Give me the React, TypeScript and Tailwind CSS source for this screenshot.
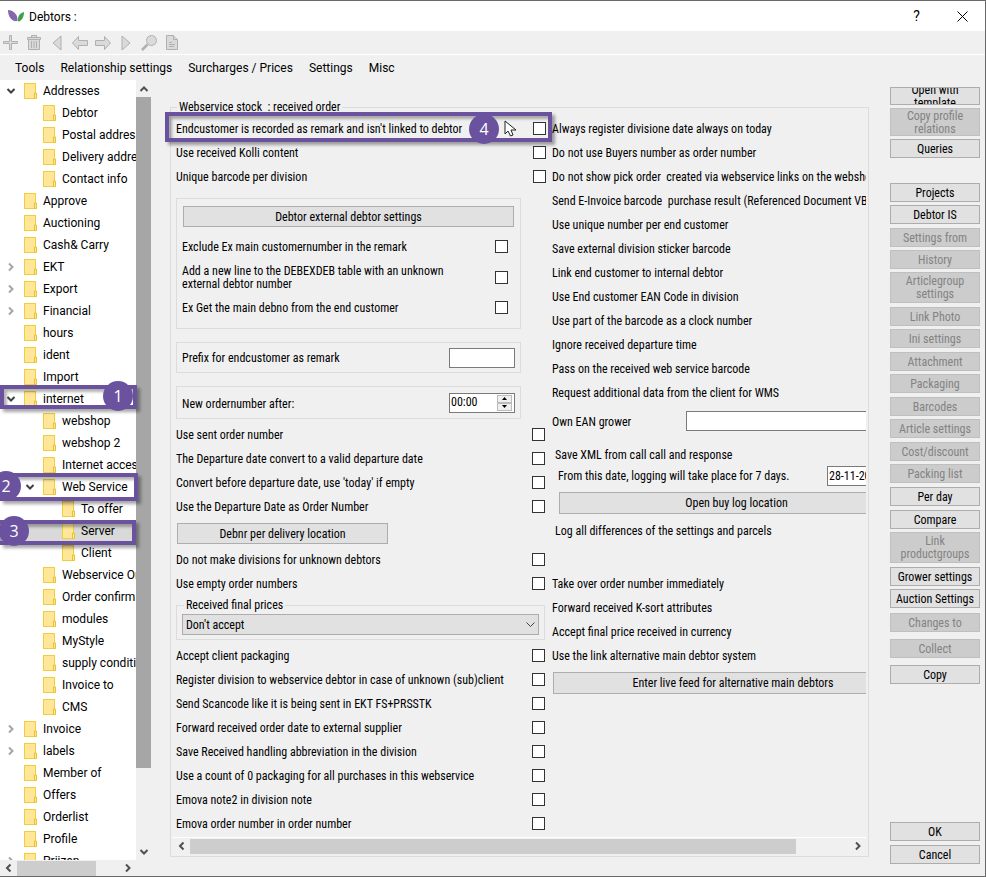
import type { ReactNode } from "react";

type TreeItem = { label: string; level: 0 | 1 | 2; state?: "open" | "closed"; selected?: boolean };

const tree: TreeItem[] = [
  { label: "Addresses", level: 0, state: "open" },
  { label: "Debtor", level: 1 },
  { label: "Postal addresses", level: 1 },
  { label: "Delivery addresses", level: 1 },
  { label: "Contact info", level: 1 },
  { label: "Approve", level: 0 },
  { label: "Auctioning", level: 0 },
  { label: "Cash& Carry", level: 0 },
  { label: "EKT", level: 0, state: "closed" },
  { label: "Export", level: 0, state: "closed" },
  { label: "Financial", level: 0, state: "closed" },
  { label: "hours", level: 0 },
  { label: "ident", level: 0 },
  { label: "Import", level: 0 },
  { label: "internet", level: 0, state: "open" },
  { label: "webshop", level: 1 },
  { label: "webshop 2", level: 1 },
  { label: "Internet access", level: 1 },
  { label: "Web Service", level: 1, state: "open" },
  { label: "To offer", level: 2 },
  { label: "Server", level: 2, selected: true },
  { label: "Client", level: 2 },
  { label: "Webservice Orders", level: 1 },
  { label: "Order confirmation", level: 1 },
  { label: "modules", level: 1 },
  { label: "MyStyle", level: 1 },
  { label: "supply conditions", level: 1 },
  { label: "Invoice to", level: 1 },
  { label: "CMS", level: 1 },
  { label: "Invoice", level: 0, state: "closed" },
  { label: "labels", level: 0, state: "closed" },
  { label: "Member of", level: 0 },
  { label: "Offers", level: 0 },
  { label: "Orderlist", level: 0 },
  { label: "Profile", level: 0 },
  { label: "Prijzen", level: 0, state: "closed" },
];

const indent = { 0: "pl-0", 1: "pl-[19px]", 2: "pl-[38px]" };

function Chevron({ dir, className }: { dir: "up" | "down" | "left" | "right"; className: string }) {
  const d = {
    up: "M1.5 7 5 3.5 8.5 7",
    down: "M1.5 3 5 6.5 8.5 3",
    left: "M6.5 1.5 3 5 6.5 8.5",
    right: "M3 1.5 6.5 5 3 8.5",
  }[dir];
  return (
    <svg viewBox="0 0 10 10" className={`h-[10px] w-[10px] shrink-0 fill-none ${className}`} strokeWidth="2">
      <path d={d} />
    </svg>
  );
}

function Folder() {
  return (
    <svg viewBox="0 0 13 16" className="h-4 w-[13px] shrink-0">
      <rect x="0.5" y="0.5" width="11" height="15" fill="#ffe699" stroke="#f0cf3a" />
      <path d="M10.5 15.5v-5.5h2v5.5z" fill="#ffe699" stroke="#e8c22f" />
    </svg>
  );
}

function TreeRow({ item }: { item: TreeItem }) {
  return (
    <li className={`flex h-[22px] shrink-0 items-center ${indent[item.level]} ${item.selected ? "bg-[#d9d9d9]" : ""}`}>
      <span className="flex w-6 shrink-0 justify-center pr-[3px]">
        {item.state === "open" && <Chevron dir="down" className="stroke-[#404040]" />}
        {item.state === "closed" && <Chevron dir="right" className="stroke-[#a6a6a6]" />}
      </span>
      <Folder />
      <span className="whitespace-nowrap pl-[6px]">{item.label}</span>
    </li>
  );
}

function Badge({ n, className }: { n: number; className: string }) {
  return (
    <span
      className={`absolute flex h-[30px] w-[30px] items-center justify-center rounded-full bg-[#6b529f] font-['Open_Sans',sans-serif] text-[16px] text-white ${className}`}
    >
      {n}
    </span>
  );
}

function Frame({ className }: { className: string }) {
  return (
    <span
      className={`pointer-events-none absolute border-[#6b529f] shadow-[3px_3px_3px_rgba(0,0,0,0.35),inset_3px_3px_3px_rgba(0,0,0,0.3)] ${className}`}
    />
  );
}

const boxClass = "mb-px h-[13px] w-[13px] shrink-0 appearance-none border border-[#333] bg-white checked:bg-[#333]";

function Tick({ children, tall }: { children: ReactNode; tall?: boolean }) {
  return (
    <label className={`flex items-center justify-between ${tall ? "h-[37px]" : "h-6"}`}>
      <span className="pt-px">{children}</span>
      <input type="checkbox" className={boxClass} />
    </label>
  );
}

function Line({ children }: { children: ReactNode }) {
  return <p className="flex h-6 items-center pt-px">{children}</p>;
}

function Push({ children, className, disabled }: { children: ReactNode; className: string; disabled?: boolean }) {
  return (
    <button
      type="button"
      disabled={disabled}
      className={`flex shrink-0 items-center justify-center overflow-hidden border border-[#adadad] bg-[#e1e1e1] pt-px text-center leading-[13px] text-black disabled:border-[#bfbfbf] disabled:bg-[#ccc] disabled:text-[#838383] ${className}`}
    >
      {children}
    </button>
  );
}

const tools: [string, ReactNode][] = [
  ["Add", <path key="a" d="M6.500 .500h2v6h6v2h-6v6h-2v-6h-6v-2h6z" />],
  ["Delete", <path key="d" d="M1.500 2.500h13v2h-13zM5.500 2.500v-2h5v2M2.500 4.500h11v10h-11zM5.500 6v7M8 6v7M10.500 6v7" />],
  ["First", <path key="f" d="M12 1v14L4 8z" />],
  ["Previous", <path key="p" d="M.500 8 6.500 1.500v4h9v5h-9v4z" />],
  ["Next", <path key="n" d="M15.500 8 9.500 1.500v4h-9v5h9v4z" />],
  ["Last", <path key="l" d="M4 1v14L12 8z" />],
  ["Search", <g key="s"><circle cx="10.500" cy="5.500" r="5" /><path d="M6.500 9.500 1 15" strokeWidth="2.500" /></g>],
  ["Document", <g key="o"><path d="M2.500 .500h7l4 4v10h-11z" /><path d="M9.500 .500v4h4M5 7.500h3M5 9.500h6M5 11.500h5" /></g>],
];

const actions: { label: string; gap: string; off?: boolean; h?: string }[] = [
  { label: "Projects", gap: "" },
  { label: "Debtor IS", gap: "mt-[3px]" },
  { label: "Settings from", gap: "mt-1", off: true },
  { label: "History", gap: "mt-[3px]", off: true },
  { label: "Articlegroup settings", gap: "mt-[3px]", off: true, h: "h-[31px]" },
  { label: "Link Photo", gap: "mt-1", off: true },
  { label: "Ini settings", gap: "mt-[3px]", off: true },
  { label: "Attachment", gap: "mt-1", off: true },
  { label: "Packaging", gap: "mt-[3px]", off: true },
  { label: "Barcodes", gap: "mt-1", off: true },
  { label: "Article settings", gap: "mt-[3px]", off: true },
  { label: "Cost/discount", gap: "mt-1", off: true },
  { label: "Packing list", gap: "mt-[3px]", off: true },
  { label: "Per day", gap: "mt-1" },
  { label: "Compare", gap: "mt-1" },
  { label: "Link productgroups", gap: "mt-[3px]", off: true, h: "h-[31px]" },
  { label: "Grower settings", gap: "mt-1" },
  { label: "Auction Settings", gap: "mt-[3px]" },
  { label: "Changes to", gap: "mt-[5px]", off: true },
  { label: "Collect", gap: "mt-[7px]", off: true },
  { label: "Copy", gap: "mt-[7px]" },
];

const orderOptions = [
  "Always register divisione date always on today",
  "Do not use Buyers number as order number",
  "Do not show pick order  created via webservice links on the webshop",
  "Send E-Invoice barcode  purchase result (Referenced Document VBN)",
  "Use unique number per end customer",
  "Save external division sticker barcode",
  "Link end customer to internal debtor",
  "Use End customer EAN Code in division",
  "Use part of the barcode as a clock number",
  "Ignore received departure time",
  "Pass on the received web service barcode",
  "Request additional data from the client for WMS",
];

function Sidebar() {
  return (
    <aside className="relative flex w-[151px] shrink-0 flex-col">
      <div className="flex min-h-0 flex-1">
        <ul className="min-w-0 flex-1 overflow-hidden bg-white font-[Roboto,sans-serif] text-[12px]">
          {tree.map((item) => (
            <TreeRow key={item.label} item={item} />
          ))}
        </ul>
        <div className="flex w-[15px] flex-col items-center justify-between">
          <div className="flex h-[17px] items-center">
            <Chevron dir="up" className="stroke-[#505050]" />
          </div>
          <div className="flex w-full flex-1 flex-col">
            <div className="h-[90%] bg-[#a6a6a6]" />
          </div>
          <div className="flex h-[17px] items-center">
            <Chevron dir="down" className="stroke-[#505050]" />
          </div>
        </div>
      </div>
      <div className="flex h-4 w-[136px] items-center">
        <span className="flex w-[17px] justify-center">
          <Chevron dir="left" className="stroke-[#505050]" />
        </span>
        <div className="flex h-[15px] flex-1">
          <div className="w-[79px] bg-[#cdcdcd]" />
        </div>
        <span className="flex w-[17px] justify-center">
          <Chevron dir="right" className="stroke-[#505050]" />
        </span>
      </div>

      <Frame className="left-0 top-[305px] h-6 w-[137px] border-4" />
      <Badge n={1} className="left-[103px] top-[301px]" />
      <Frame className="left-0 top-[393px] h-7 w-[138px] border-4 border-l-0" />
      <Badge n={2} className="left-[-9px] top-[391px]" />
      <Frame className="left-0 top-[440px] h-[25px] w-[136px] border-4 border-l-0" />
      <Badge n={3} className="left-[-1px] top-[436px]" />
    </aside>
  );
}

function LeftColumn() {
  return (
    <div className="flex w-[370px] shrink-0 flex-col">
      <Tick>Endcustomer is recorded as remark and isn't linked to debtor</Tick>
      <Tick>Use received Kolli content</Tick>
      <Tick>Unique barcode per division</Tick>

      <div className="mt-[9px] flex h-[131px] w-[345px] flex-col border border-[#dcdcdc] px-[5px] pt-[7px]">
        <Push className="mx-px h-[21px]">Debtor external debtor settings</Push>
        <div className="flex flex-col pr-[7px] pt-2">
          <Tick>Exclude Ex main customernumber in the remark</Tick>
          <Tick tall>
            Add a new line to the DEBEXDEB table with an unknown
            <br />
            external debtor number
          </Tick>
          <Tick>Ex Get the main debno from the end customer</Tick>
        </div>
      </div>

      <label className="mt-[13px] flex h-[31px] w-[345px] items-center justify-between border border-[#dcdcdc] px-[5px]">
        <span className="pt-[2px]">Prefix for endcustomer as remark</span>
        <input type="text" className="h-5 w-[66px] border border-[#7a7a7a] bg-white px-1" />
      </label>

      <div className="mt-[13px] flex h-[33px] w-[345px] items-center justify-between border border-[#dcdcdc] px-[5px]">
        <label htmlFor="after" className="pt-[3px]">New ordernumber after:</label>
        <div className="flex h-5 w-[66px] border border-[#7a7a7a] bg-white">
          <input id="after" type="text" defaultValue="00:00" className="w-0 flex-1 bg-transparent px-px outline-none" />
          <div className="my-px mr-[2px] flex w-[15px] flex-col">
            <button type="button" aria-label="Increase" className="flex flex-1 items-center justify-center border border-[#bbb] bg-[#f0f0f0]">
              <svg viewBox="0 0 5 3" className="h-[3px] w-[5px]"><path d="M0 3h5L2.500 0z" /></svg>
            </button>
            <button type="button" aria-label="Decrease" className="flex flex-1 items-center justify-center border border-[#bbb] bg-[#f0f0f0]">
              <svg viewBox="0 0 5 3" className="h-[3px] w-[5px]"><path d="M0 0h5L2.500 3z" /></svg>
            </button>
          </div>
        </div>
      </div>

      <div className="flex flex-col pr-px pt-1">
        <Tick>Use sent order number</Tick>
        <Tick>The Departure date convert to a valid departure date</Tick>
        <Tick>Convert before departure date, use 'today' if empty</Tick>
        <Tick>Use the Departure Date as Order Number</Tick>
        <Push className="mb-1 ml-px mt-1 h-[21px] w-[211px]">Debnr per delivery location</Push>
        <Tick>Do not make divisions for unknown debtors</Tick>
        <Tick>Use empty order numbers</Tick>
      </div>

      <fieldset className="mr-px mt-[3px] h-[41px] min-w-0 border border-[#dcdcdc] px-[5px]">
        <legend className="ml-[2px] px-[2px] leading-[13px]">
          <label htmlFor="prices">Received final prices</label>
        </legend>
        <div className="relative mt-[2px]">
          <select
            id="prices"
            className="block h-[21px] w-full appearance-none border border-[#adadad] bg-[#e1e1e1] px-[3px] pt-px"
          >
            <option>Don't accept</option>
          </select>
          <svg viewBox="0 0 9 6" className="pointer-events-none absolute right-1 top-2 h-[6px] w-[9px] fill-none stroke-[#444]">
            <path d="M.5.5l4 4 4-4" />
          </svg>
        </div>
      </fieldset>

      <div className="flex flex-col pr-px pt-1">
        <Tick>Accept client packaging</Tick>
        <Tick>Register division to webservice debtor in case of unknown (sub)client</Tick>
        <Tick>Send Scancode like it is being sent in EKT FS+PRSSTK</Tick>
        <Tick>Forward received order date to external supplier</Tick>
        <Tick>Save Received handling abbreviation in the division</Tick>
        <Tick>Use a count of 0 packaging for all purchases in this webservice</Tick>
        <Tick>Emova note2 in division note</Tick>
        <Tick>Emova order number in order number</Tick>
      </div>
    </div>
  );
}

function RightColumn() {
  return (
    <div className="flex w-[368px] shrink-0 flex-col whitespace-pre pl-[6px]">
      {orderOptions.map((text) => (
        <Line key={text}>{text}</Line>
      ))}
      <label className="flex h-8 items-center justify-between">
        <span className="pt-[2px]">Own EAN grower</span>
        <input type="text" className="h-5 w-[228px] border border-[#7a7a7a] bg-white px-1" />
      </label>
      <div className="flex flex-col pl-[3px] pt-[9px]">
        <p className="flex h-[18px] items-center">Save XML from call call and response</p>
        <label className="flex h-6 items-center justify-between pl-[3px]">
          From this date, logging will take place for 7 days.
          <input type="text" defaultValue="28-11-2023" className="h-5 w-[87px] border border-[#7a7a7a] bg-white px-px" />
        </label>
      </div>
      <Push className="ml-[7px] mt-1 h-[22px]">Open buy log location</Push>
      <div className="mb-[29px] ml-[3px] mt-[5px]">
        <Line>Log all differences of the settings and parcels</Line>
      </div>
      <Line>Take over order number immediately</Line>
      <Line>Forward received K-sort attributes</Line>
      <Line>Accept final price received in currency</Line>
      <Line>Use the link alternative main debtor system</Line>
      <Push className="ml-px mt-1 h-[22px] w-[360px]">Enter live feed for alternative main debtors</Push>
    </div>
  );
}

export default function App() {
  return (
    <div className="flex h-screen min-h-[877px] flex-col overflow-hidden border-b border-r border-t border-[#696969] bg-[#f0f0f0] font-['Roboto_Condensed','Liberation_Sans',sans-serif] text-[12px] leading-[13px] text-black">
      <header className="flex h-[30px] shrink-0 items-center bg-white pl-2 font-[Roboto,sans-serif]">
        <svg viewBox="0 0 16 12" className="h-3 w-4">
          <path d="M0 0c5 0 10 4 9.500 11C5 12 0 8 0 0z" fill="#8467ad" />
          <path d="M16 2c0 5-2 9-6 9.500C9.500 6 12 3 16 2z" fill="#3f9f4c" />
        </svg>
        <h1 className="flex-1 pl-[5px] pt-[2px]">Debtors :</h1>
        <button type="button" aria-label="Help" className="w-[45px] text-[14px]">?</button>
        <button type="button" aria-label="Close" className="flex w-[46px] justify-center">
          <svg viewBox="0 0 11 11" className="h-[11px] w-[11px] stroke-black"><path d="M.5.5l10 10M10.500.5l-10 10" /></svg>
        </button>
      </header>

      <div className="flex h-6 shrink-0 items-center border-b border-white">
        {tools.map(([name, shape]) => (
          <button key={name} type="button" aria-label={name} className="flex w-[23px] justify-center pr-px">
            <svg viewBox="0 0 16 16" className="h-4 w-4 shrink-0 fill-[#dadada] stroke-[#b0b0b0]">{shape}</svg>
          </button>
        ))}
      </div>

      <nav className="flex h-[25px] shrink-0 items-center gap-4 pl-[15px] pt-[2px] font-[Roboto,sans-serif]">
        <button type="button">Tools</button>
        <button type="button">Relationship settings</button>
        <button type="button">Surcharges / Prices</button>
        <button type="button">Settings</button>
        <button type="button">Misc</button>
      </nav>

      <div className="flex min-h-0 flex-1">
        <Sidebar />

        <main className="relative flex min-w-0 flex-1 flex-col pb-[19px] pl-[19px] pr-[21px] pt-[21px]">
          <fieldset className="flex min-h-0 min-w-0 flex-1 flex-col border border-[#dcdcdc] px-[2px]">
            <legend className="ml-1 px-[2px] leading-[13px]">Webservice stock&nbsp; : received order</legend>
            <div className="flex h-[724px] overflow-hidden border-b border-white pl-[3px] pt-[3px]">
              <LeftColumn />
              <RightColumn />
            </div>
            <div className="flex h-4 items-center">
              <span className="flex w-[17px] justify-center">
                <Chevron dir="left" className="stroke-[#505050]" />
              </span>
              <div className="flex h-[15px] flex-1">
                <div className="w-[92%] bg-[#cdcdcd]" />
              </div>
              <span className="flex w-[17px] justify-center">
                <Chevron dir="right" className="stroke-[#505050]" />
              </span>
            </div>
          </fieldset>

          <Frame className="left-[14px] top-8 h-[30px] w-[387px] border-4" />
          <Badge n={4} className="left-[318px] top-[34px]" />
          <svg viewBox="0 0 14 17" className="absolute left-[353px] top-[40px] h-[17px] w-[14px]">
            <path d="M1 1v13l3-3 2.500 5 2.500-1-2-5h5z" fill="#fff" stroke="#222" />
          </svg>
        </main>

        <aside className="flex w-[95px] shrink-0 flex-col pb-3 pr-[5px] pt-[7px]">
          <Push className="h-[18px]">Open with template</Push>
          <Push className="mt-[3px] h-7" disabled>Copy profile relations</Push>
          <Push className="mb-[25px] mt-[3px] h-[19px]">Queries</Push>
          {actions.map((a) => (
            <Push key={a.label} disabled={a.off} className={`${a.h ?? "h-[19px]"} ${a.gap}`}>
              {a.label}
            </Push>
          ))}
          <Push className="mt-auto h-[19px]">OK</Push>
          <Push className="mt-1 h-[19px]">Cancel</Push>
        </aside>
      </div>
    </div>
  );
}
